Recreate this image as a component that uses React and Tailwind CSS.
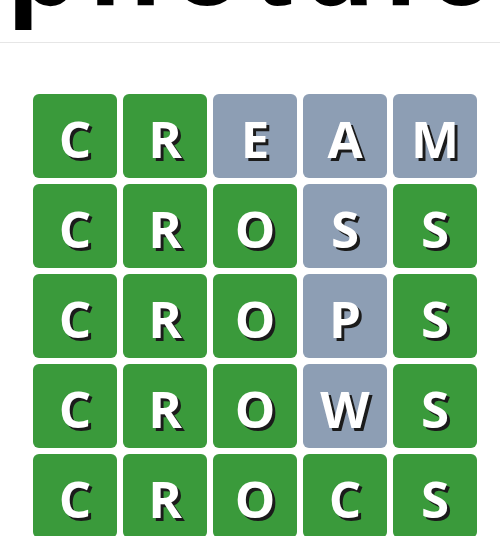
import React from 'react';

const ROWS = [
  ['C', 'R', 'E', 'A', 'M'],
  ['C', 'R', 'O', 'S', 'S'],
  ['C', 'R', 'O', 'P', 'S'],
  ['C', 'R', 'O', 'W', 'S'],
  ['C', 'R', 'O', 'C', 'S'],
];

const STATES = [
  ['g', 'g', 'x', 'x', 'x'],
  ['g', 'g', 'g', 'x', 'g'],
  ['g', 'g', 'g', 'x', 'g'],
  ['g', 'g', 'g', 'x', 'g'],
  ['g', 'g', 'g', 'g', 'g'],
];

function Tile({ letter, state }) {
  return (
    <div
      className={`flex h-[84px] w-[84px] items-center justify-center rounded-[6px] pt-[5px] text-[51px] font-bold text-white [text-shadow:3px_3px_0_#1b1b1b] ${
        state === 'g' ? 'bg-[#3a9a3b]' : 'bg-[#8d9eb4]'
      }`}
    >
      {letter}
    </div>
  );
}

export default function App() {
  return (
    <div className="min-h-[536px] overflow-hidden bg-white font-['Open_Sans',sans-serif]">
      <header className="h-[43px] overflow-hidden border-b border-[#e6e6e6]">
        <h1 className="mt-[-95px] whitespace-nowrap pl-[7px] font-['Liberation_Sans',sans-serif] text-[118px] font-bold leading-[118px] tracking-[10px] text-black">
          photdle
        </h1>
      </header>
      <div className="pl-[33px] pt-[51px]">
        <div className="grid w-max grid-cols-5 gap-[6px]">
          {ROWS.map((row, r) =>
            row.map((letter, c) => (
              <Tile key={`${r}-${c}`} letter={letter} state={STATES[r][c]} />
            ))
          )}
        </div>
      </div>
    </div>
  );
}
